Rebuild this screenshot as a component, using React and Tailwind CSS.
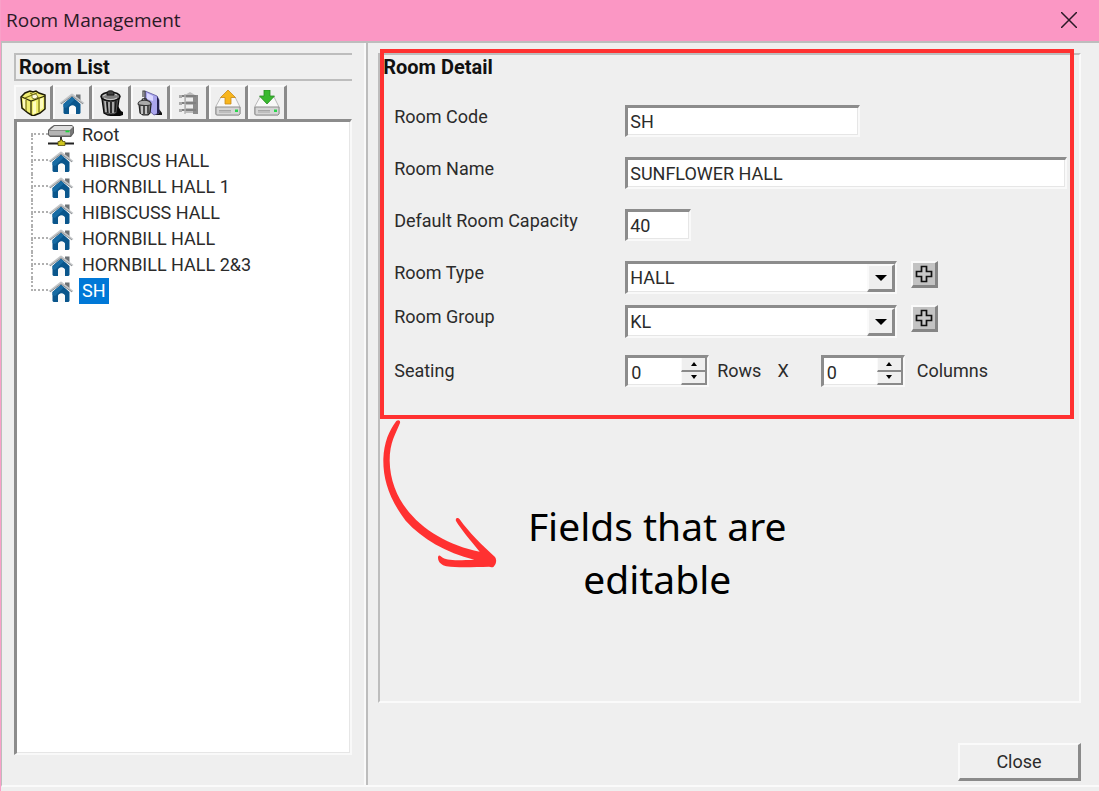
import React, { useState } from "react";

const rooms = [
  "HIBISCUS HALL",
  "HORNBILL HALL 1",
  "HIBISCUSS HALL",
  "HORNBILL HALL",
  "HORNBILL HALL 2&3",
  "SH",
];

const sunken =
  "border-t-[3px] border-l-[3px] border-r-2 border-b-2 border-t-[#8c8c8c] border-l-[#8c8c8c] border-r-[#f9f9f9] border-b-[#f9f9f9] bg-white shadow-[inset_-1px_-1px_0_#e6e6e6]";
const raised =
  "border-t-2 border-l-2 border-r-[3px] border-b-[3px] border-t-[#fafafa] border-l-[#fafafa] border-r-[#8a8a8a] border-b-[#8a8a8a] bg-[#efefef]";

const HouseIcon = () => (
  <svg viewBox="0 0 26 26" className="size-[26px] shrink-0">
    <path d="M17 4.500h4.500V11L17 7z" fill="#6d7276" />
    <path d="M4.500 14 13 6.500l8.500 7.500v9l-1 1H17v-5a3.500 3.500 0 0 0-7 0v5H5.500l-1-1z" fill="#0a568c" />
    <path d="M4.500 14 13 6.500l3 2.700-9 8.800-2.500-1z" fill="#176ba3" />
    <path d="M10 24v-5a3.500 3.500 0 0 1 7 0v5z" fill="#fafafa" />
    <path d="M0.500 13 12 4l1-.5 1 .5 11.500 9-1.500 1L13 6.500 2 14z" fill="#c4c6c8" />
    <path d="m2 14 11-8 11 8" fill="none" stroke="#777c80" strokeWidth="0.800" />
  </svg>
);

const NetworkDriveIcon = () => (
  <svg viewBox="0 0 26 26" className="size-[26px] shrink-0">
    <path d="M3 5 6 3h18l2 2v6l-3 4H2l-2-2V8z" fill="#606060" />
    <path d="M3 7 6.500 4H24l1 1-3 3H2z" fill="#dedede" />
    <path d="M1 8.500h21v5H2l-1-1z" fill="#b5b5b5" />
    <path d="m22 8.500 3-3V11l-3 3z" fill="#777" />
    <path d="M17.500 8.500h4v1.800h-4z" fill="#1cd63a" />
    <path d="M13 15v6M0 21.500h26" stroke="#222" strokeWidth="1.800" />
    <path d="M10 19.500h2V18h2.500v1.500H17v4h-7z" fill="#cfc51f" stroke="#55510b" strokeWidth="0.800" />
  </svg>
);

const BoxIcon = () => (
  <svg viewBox="0 0 26 26" className="size-[26px]">
    <path d="M1 7 5 3l5-2 3 1 3-1 3 2 6 2v14l-5 4-7 3-5-3-6-5z" fill="#f0ee72" stroke="#1c1a05" strokeWidth="1.500" />
    <path d="m2 7 9 4 14-5M11 11v14" fill="none" stroke="#302d08" strokeWidth="1.300" />
    <path d="M3 9v8l3 3V10zM13 12v12l3-1V11zM20 9v11l3-2V8z" fill="#fffcc0" />
    <path d="m5 8 12-5M10 3l9 5v14M6 10v11" fill="none" stroke="#77720f" strokeWidth="1.200" />
    <path d="m12 5 4-1 2 3-3 2-3-1z" fill="#fffde2" stroke="#5f5b10" strokeWidth="0.700" />
  </svg>
);

const TrashIcon = () => (
  <svg viewBox="0 0 26 26" className="size-[26px]">
    <path d="m11 25 2-3 7-6 3 5 2 1v3l-3 1H12z" fill="#080808" />
    <path d="m4 9 2 14 4 2h6l3-2 2-14z" fill="#555" stroke="#0b0b0b" strokeWidth="1.300" />
    <path d="m7 11 1 11M11 12v11M15 12v11" stroke="#bbb" strokeWidth="1.600" />
    <path d="m9 12 1 11M13 12v11M18 11l-1 11" stroke="#151515" strokeWidth="1.300" />
    <ellipse cx="12.500" cy="6.500" rx="9.500" ry="4.300" fill="#7d7d7d" stroke="#111" strokeWidth="1.600" />
    <path d="M5 6c4-3 9-3 14-1M6 8c4 2 9 2 13 0" fill="none" stroke="#c8c8c8" strokeWidth="1.200" />
    <path d="M9 3c0-3 7-3 7 0v2H9z" fill="#444" stroke="#111" />
  </svg>
);

const TrashDoorIcon = () => (
  <svg viewBox="0 0 26 26" className="size-[26px]">
    <path d="m17 24 5-5 3 4v2h-7z" fill="#101010" />
    <path d="M8 1 20 6l2 4v13l-5 2-9-8z" fill="#aaa5ed" stroke="#5b579a" strokeWidth="0.800" />
    <path d="m20 6 2 4v13l-2 1z" fill="#23204d" />
    <path d="m10 3 6 3v5l-6-2z" fill="#dad8ff" />
    <path d="M8 1v9M8 1H6v6" fill="none" stroke="#444" strokeWidth="1.200" />
    <path d="m2 14 1 9 3 2h5l2-2 1-9z" fill="#777" stroke="#222" strokeWidth="1.200" />
    <path d="M5 16v8M9 15v9" stroke="#ddd" strokeWidth="1.500" />
    <path d="M7 16v8M11 15v8" stroke="#222" />
    <path d="M1 14c0-5 13-5 13 0 0 2-13 2-13 0z" fill="#aaa" stroke="#333" strokeWidth="1.100" />
    <path d="M5 10.500c0-2.500 5-2.500 5 0" fill="none" stroke="#333" strokeWidth="1.200" />
  </svg>
);

const RackIcon = () => (
  <svg viewBox="0 0 26 26" className="size-[26px]">
    <path d="M9 5 14 2l5 3v18H9z" fill="#bcbcbc" />
    <path d="M17 5h5v19h-5z" fill="#8b8b8b" />
    <path d="M10 8h7v3h-7zM10 15h7v3h-7z" fill="#ededed" />
    <path d="M5 6h15M5 13h15M5 20h15" stroke="#808080" strokeWidth="1.800" />
    <path d="M9 4v20" stroke="#b2b2b2" strokeWidth="1.400" />
    <path d="M3 5h3v3H3zM3 12h3v3H3zM3 19h3v3H3z" fill="#aaa" />
  </svg>
);

const DriveIcon = ({ children }) => (
  <svg viewBox="0 0 26 26" className="size-[26px]">
    <path d="M6 7h14l5 10v7l-1 1H1.500l-1-1v-7z" fill="#f8f8f8" stroke="#aaa" strokeWidth="0.800" />
    <path d="M1 17h24v7l-1 1H1.500L1 24z" fill="#d5d5d5" stroke="#8e8e8e" strokeWidth="1" />
    <path d="M4 20.500h12M4 22h12" stroke="#a0a0a0" strokeWidth="0.900" />
    <path d="M20 19.500h3V22h-3z" fill="#2ad34d" />
    {children}
  </svg>
);

const ExportIcon = () => (
  <DriveIcon>
    <path d="m13 0 7.500 7.500H16V14h-6V7.500H5.500z" fill="#f7b51d" stroke="#c88b1b" strokeWidth="0.800" />
  </DriveIcon>
);

const ImportIcon = () => (
  <DriveIcon>
    <path d="M10 0h6v6h4.500L13 14 5.500 6H10z" fill="#39b92f" stroke="#268b21" strokeWidth="0.800" />
  </DriveIcon>
);

const tools = [
  { label: "New group", Icon: BoxIcon },
  { label: "New room", Icon: HouseIcon },
  { label: "Delete", Icon: TrashIcon },
  { label: "Remove room", Icon: TrashDoorIcon },
  { label: "Arrange", Icon: RackIcon },
  { label: "Export", Icon: ExportIcon },
  { label: "Import", Icon: ImportIcon },
];

const TreeItem = ({ first, last, icon, name, selected, onSelect }) => (
  <li className="flex h-[26px] items-center pl-3.5">
    {/* dotted connector */}
    <span className="flex h-full w-[17px] flex-col">
      <span className={`h-1/2 border-b-2 border-dotted border-[#b0b0b0] ${first ? "" : "border-l-2"}`}></span>
      <span className={`h-1/2 border-dotted border-[#b0b0b0] ${last ? "" : "border-l-2"}`}></span>
    </span>
    {icon}
    <button
      className={`ml-[5px] h-full px-[3px] whitespace-nowrap ${selected ? "bg-[#0078d7] text-white" : ""}`}
      onClick={onSelect}
    >
      {name}
    </button>
  </li>
);

const Field = ({ id, label, children }) => (
  <div className="flex h-8 items-start">
    <label htmlFor={id} className="w-[231px] shrink-0 leading-6">
      {label}
    </label>
    {children}
  </div>
);

const SelectBox = ({ id, options }) => (
  <div className="relative h-[33px] w-[272px]">
    <select id={id} className={`h-full w-full appearance-none rounded-none pl-0.5 outline-none ${sunken}`}>
      {options.map((o) => (
        <option key={o}>{o}</option>
      ))}
    </select>
    <span
      className={`pointer-events-none absolute top-[3px] right-0.5 bottom-0.5 flex w-7 items-center justify-center ${raised}`}
    >
      <svg viewBox="0 0 12 6" className="h-1.5 w-3">
        <path d="M0 0h12L6 6z" fill="#000" />
      </svg>
    </span>
  </div>
);

const PlusButton = ({ label }) => (
  <button
    aria-label={label}
    className="ml-3.5 flex size-[27px] items-center justify-center border-t-2 border-r-[3px] border-b-[3px] border-l-2 border-t-[#fafafa] border-r-[#858585] border-b-[#858585] border-l-[#fafafa] bg-[#c3c3c3]"
  >
    <svg viewBox="0 0 18 18" className="size-[18px]">
      <path d="M6.500 1.500h5v5h5v5h-5v5h-5v-5h-5v-5h5z" fill="#c9c9c9" stroke="#111" strokeWidth="1.700" />
    </svg>
  </button>
);

const Spinner = ({ id, value, onChange }) => (
  <div className={`flex h-8 w-[84px] ${sunken}`}>
    <input
      id={id}
      type="text"
      inputMode="numeric"
      value={value}
      onChange={(e) => onChange(Number(e.target.value) || 0)}
      className="min-w-0 flex-1 pt-0.5 pl-[3px] outline-none"
    />
    <div className="flex w-[26px] flex-col">
      <button
        aria-label="Increase"
        onClick={() => onChange(value + 1)}
        className="flex flex-1 items-center justify-center border-r-2 border-b-2 border-l border-[#8a8a8a] border-l-[#fafafa] bg-[#efefef]"
      >
        <svg viewBox="0 0 6 4" className="h-1 w-1.5">
          <path d="M0 4h6L3 0z" />
        </svg>
      </button>
      <button
        aria-label="Decrease"
        onClick={() => onChange(Math.max(0, value - 1))}
        className="flex flex-1 items-center justify-center border-r-2 border-b-2 border-l border-[#8a8a8a] border-l-[#fafafa] bg-[#efefef]"
      >
        <svg viewBox="0 0 6 4" className="h-1 w-1.5">
          <path d="M0 0h6L3 4z" />
        </svg>
      </button>
    </div>
  </div>
);

const RoomList = ({ selected, onSelect }) => (
  <aside className="flex w-[33.2%] shrink-0 flex-col border-r-2 border-[#fafafa] pt-2.5 pr-3 pb-[30px] pl-3">
    <h2 className="h-7 border-t-2 border-b-2 border-l-2 border-[#bdbdbd] pl-[3px] text-xl leading-6 font-bold text-[#111]">
      Room List
    </h2>
    <div className="mt-1 flex h-[34px]">
      {tools.map(({ label, Icon }) => (
        <button
          key={label}
          aria-label={label}
          className="flex w-[39px] items-center justify-center border-t-2 border-r-[3px] border-l-2 border-t-[#fafafa] border-r-[#8a8a8a] border-l-[#fafafa]"
        >
          <Icon />
        </button>
      ))}
    </div>
    <ul className={`flex-1 ${sunken}`}>
      <TreeItem first icon={<NetworkDriveIcon />} name="Root" selected={selected === "Root"} onSelect={() => onSelect("Root")} />
      {rooms.map((room, i) => (
        <TreeItem
          key={room}
          last={i === rooms.length - 1}
          icon={<HouseIcon />}
          name={room}
          selected={selected === room}
          onSelect={() => onSelect(room)}
        />
      ))}
    </ul>
  </aside>
);

const RoomDetail = () => {
  const [rows, setRows] = useState(0);
  const [columns, setColumns] = useState(0);

  return (
    <section className="relative flex-1 border-2 border-t-[#bdbdbd] border-r-[#fafafa] border-b-[#fafafa] border-l-[#bdbdbd]">
      <h2 className="h-[50px] pl-[3px] text-xl leading-6 font-bold text-[#111]">Room Detail</h2>
      <div className="flex flex-col pr-3 pl-3.5">
        <div className="flex flex-col gap-5">
          <Field id="code" label="Room Code">
            <input id="code" defaultValue="SH" className={`h-8 w-[235px] pl-0.5 outline-none ${sunken}`} />
          </Field>
          <Field id="name" label="Room Name">
            <input id="name" defaultValue="SUNFLOWER HALL" className={`h-8 min-w-0 flex-1 pl-0.5 outline-none ${sunken}`} />
          </Field>
          <Field id="capacity" label="Default Room Capacity">
            <input id="capacity" defaultValue="40" className={`h-8 w-[66px] pl-0.5 outline-none ${sunken}`} />
          </Field>
          <Field id="type" label="Room Type">
            <SelectBox id="type" options={["HALL"]} />
            <PlusButton label="Add room type" />
          </Field>
        </div>
        <div className="mt-3">
          <Field id="group" label="Room Group">
            <SelectBox id="group" options={["KL"]} />
            <PlusButton label="Add room group" />
          </Field>
        </div>
        <div className="mt-[18px] flex items-center">
          <label htmlFor="rows" className="w-[231px] shrink-0">
            Seating
          </label>
          <Spinner id="rows" value={rows} onChange={setRows} />
          <label htmlFor="rows" className="ml-2">
            Rows
          </label>
          <span className="mr-8 ml-4">X</span>
          <Spinner id="columns" value={columns} onChange={setColumns} />
          <label htmlFor="columns" className="ml-3">
            Columns
          </label>
        </div>
      </div>

      {/* callout */}
      <div className="pointer-events-none absolute -top-1.5 right-[5px] left-0 h-[370px] border-4 border-[#ff3131]"></div>
      <div className="mt-8 flex items-end gap-5 pl-[3px]">
        <svg viewBox="42 60 342 450" className="h-[150px] w-[114px] shrink-0">
          <path
            d="M82 66C88 61 95 64 93 72C80 105 62 130 62 185C64 330 190 430 332 458C305 425 275 390 261 366C258 357 267 354 272 361C300 400 340 440 378 474C384 482 382 495 374 503C368 506 364 504 360 503C320 504 270 507 232 502C218 499 206 490 207 474C210 466 214 470 218 474C230 486 270 484 316 482C230 460 160 420 110 365C60 300 42 240 43 180C45 130 60 95 82 66Z"
            fill="#ff3131"
          />
        </svg>
        <p className="-mb-9 w-[280px] text-center font-['Noto_Sans'] text-[39px] leading-[53px] text-black">
          Fields that are editable
        </p>
      </div>
    </section>
  );
};

const App = () => {
  const [selected, setSelected] = useState("SH");

  return (
    <div className="flex min-h-screen flex-col border-l border-[#f9a0c8] bg-[#efefef] font-[Roboto,sans-serif] text-lg leading-6 text-[#2b2b2b]">
      <header className="flex h-[41px] items-center justify-between bg-[#fb97c4] pr-[22px] pb-0.5 pl-[5px]">
        <h1 className="font-['Open_Sans',sans-serif] text-[19px] text-[#2a1a26]">Room Management</h1>
        <button aria-label="Close window">
          <svg viewBox="0 0 16 16" className="size-4">
            <path d="m0 0 16 16M16 0 0 16" stroke="#2a1a26" strokeWidth="1.500" />
          </svg>
        </button>
      </header>
      <main className="mb-1 flex flex-1 border-t-2 border-b-2 border-l border-t-[#bdbdbd] border-b-[#fafafa] border-l-[#bdbdbd]">
        <RoomList selected={selected} onSelect={setSelected} />
        <div className="flex min-w-0 flex-1 flex-col border-l-2 border-[#bdbdbd] pt-2.5 pr-[18px] pb-1 pl-2.5">
          <RoomDetail />
          <button className={`mt-10 h-[38px] w-[123px] self-end ${raised}`}>Close</button>
        </div>
      </main>
    </div>
  );
};

export default App;
